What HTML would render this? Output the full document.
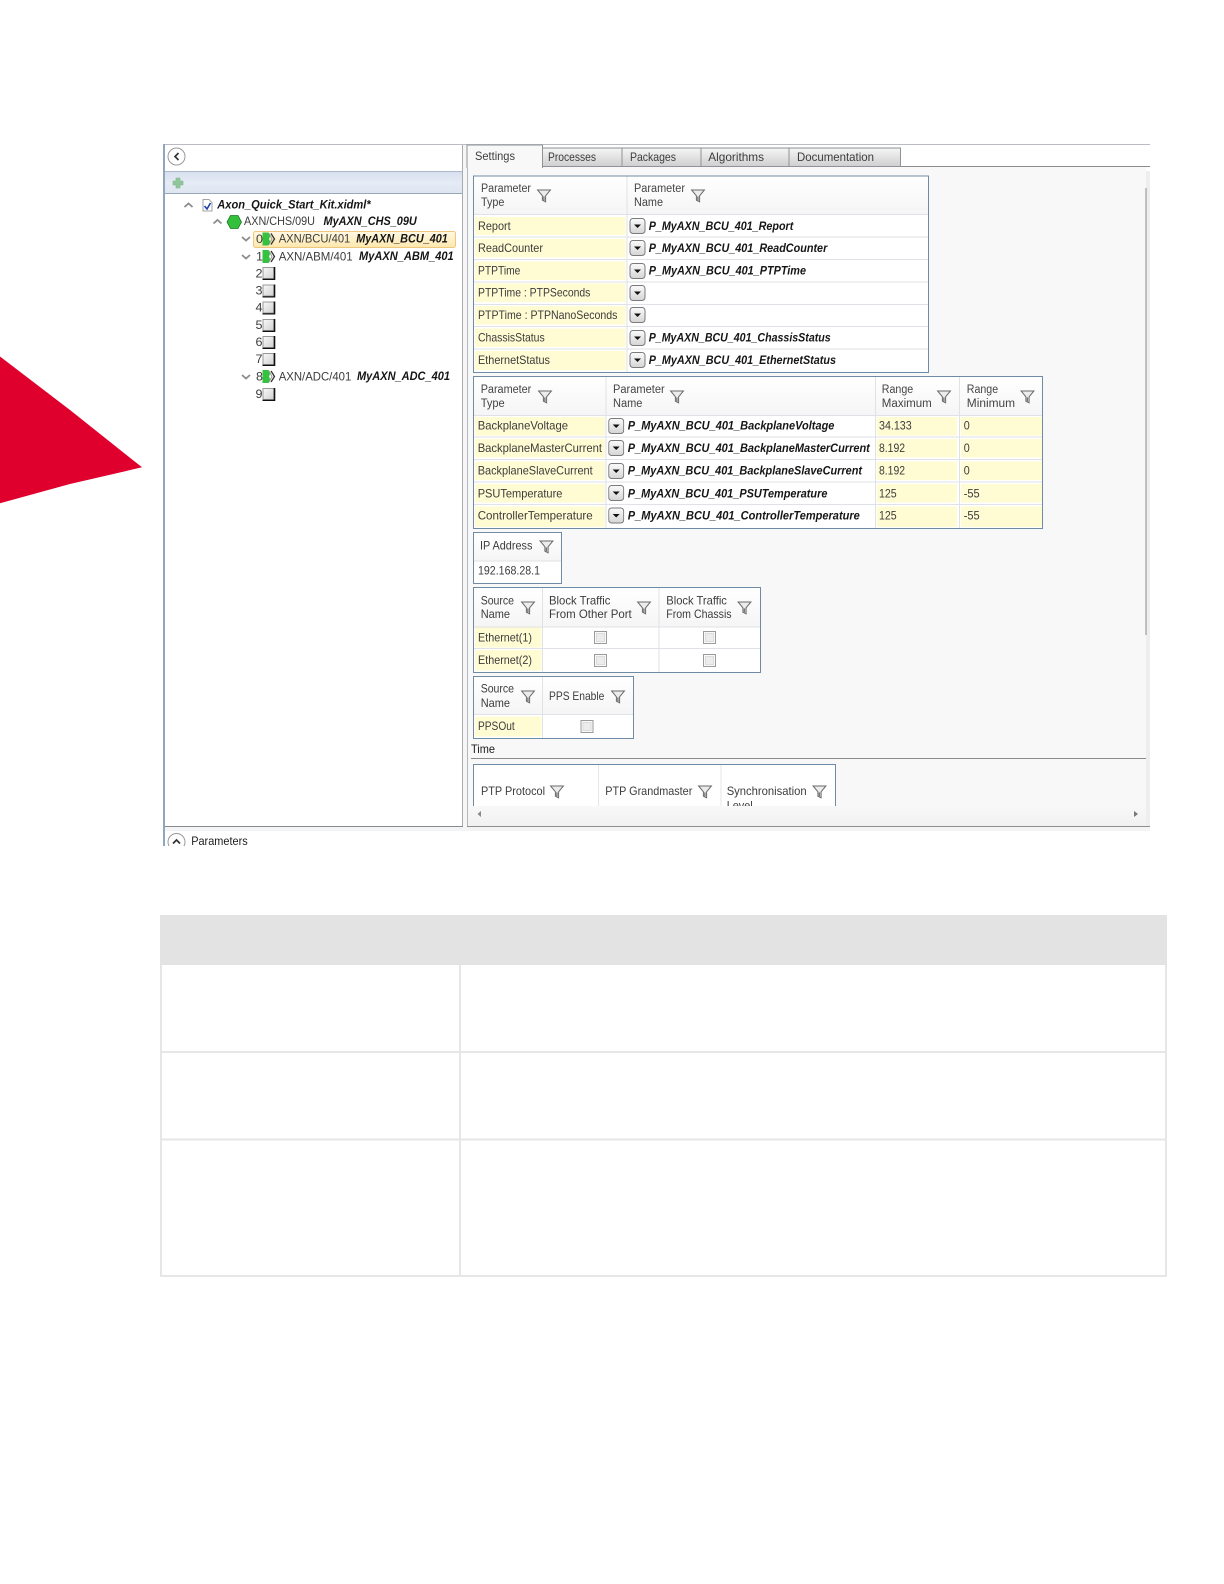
<!DOCTYPE html>
<html><head><meta charset="utf-8"><title>Axon Quick Start Kit</title>
<style>
html,body{margin:0;padding:0;background:#fff}
svg{display:block;filter:blur(.3px)}
text{font-family:"Liberation Sans",sans-serif;font-size:12px;fill:#3c3c3c}
.b{font-weight:bold;font-style:italic;fill:#151515}
.h{font-size:11.5px;fill:#444}
.k{fill:#1c1c1c}
</style></head><body>
<svg width="1224" height="1584" viewBox="0 0 1224 1584" xmlns="http://www.w3.org/2000/svg">
<defs>
<linearGradient id="hd" x1="0" y1="0" x2="0" y2="1"><stop offset="0" stop-color="#fff"/><stop offset="1" stop-color="#f5f5f5"/></linearGradient>
<linearGradient id="tab" x1="0" y1="0" x2="0" y2="1"><stop offset="0" stop-color="#f5f5f5"/><stop offset="1" stop-color="#cfcfcf"/></linearGradient>
<linearGradient id="strip" x1="0" y1="0" x2="0" y2="1"><stop offset="0" stop-color="#d6dfee"/><stop offset=".5" stop-color="#e6ebf5"/><stop offset="1" stop-color="#dde5f1"/></linearGradient>
<linearGradient id="sel" x1="0" y1="0" x2="0" y2="1"><stop offset="0" stop-color="#fff8e2"/><stop offset="1" stop-color="#fde7ad"/></linearGradient>
<linearGradient id="btn" x1="0" y1="0" x2="0" y2="1"><stop offset="0" stop-color="#fbfbfb"/><stop offset="1" stop-color="#d5d5d5"/></linearGradient>
<linearGradient id="bx" x1="0" y1="0" x2="1" y2="1"><stop offset="0" stop-color="#fafafa"/><stop offset="1" stop-color="#cfcfcf"/></linearGradient>
<linearGradient id="hs" x1="0" y1="0" x2="0" y2="1"><stop offset="0" stop-color="#f8f8f8"/><stop offset="1" stop-color="#f1f1f1"/></linearGradient>
<symbol id="f" width="14" height="14" viewBox="0 0 14 14" overflow="visible"><path d="M.6 1H13.4L8.6 6.8V12.8L5.4 11.2V6.8Z" fill="#ececec" stroke="#6a6a6a" stroke-width="1"/><path d="M6.9 7.4V11.4" stroke="#777" stroke-width="1.4"/></symbol>
<symbol id="d" width="16" height="16" viewBox="0 0 16 16"><rect x=".5" y=".5" width="15" height="15" rx="3" fill="url(#btn)" stroke="#7a7a7a"/><path d="M4.5 6.5H11.5L8 10Z" fill="#111"/></symbol>
<symbol id="c" width="13" height="13" viewBox="0 0 13 13"><rect x=".5" y=".5" width="12" height="12" fill="#f9f9f9" stroke="#9a9b9b"/><rect x="2.5" y="2.5" width="8" height="8" fill="#ececec" stroke="#dcdcdc"/></symbol>
<symbol id="x" width="13" height="13" viewBox="0 0 13 13"><rect x=".5" y=".5" width="11" height="11" fill="url(#bx)" stroke="#999"/><path d="M12 0V12.5H0" fill="none" stroke="#111" stroke-width="1.6"/></symbol>
<symbol id="m" width="13" height="13" viewBox="0 0 13 13"><path d="M0 0H6L8 3L6.5 6.5L8 10L6 13H0Z" fill="#35c23f"/><path d="M8.5 1L12 6.5L8.5 12" fill="none" stroke="#333" stroke-width="1.3"/><path d="M6.5 1L9.5 6.5L6.5 12" fill="none" stroke="#9a9a9a" stroke-width="1"/></symbol>
<symbol id="up" width="10" height="6" viewBox="0 0 10 6"><path d="M1 5L5 1.5L9 5" fill="none" stroke="#8c8c8c" stroke-width="1.8"/></symbol>
<symbol id="dn" width="10" height="6" viewBox="0 0 10 6"><path d="M1 1L5 4.5L9 1" fill="none" stroke="#8c8c8c" stroke-width="1.8"/></symbol>
<clipPath id="cp1"><rect x="160" y="827" width="200" height="19"/></clipPath>
<clipPath id="cp2"><rect x="468" y="760" width="676" height="46"/></clipPath>
</defs>

<!-- red triangle -->
<path d="M0 356.5L70 410L142 467.3L70 484L0 503.3Z" fill="#e0002d"/>

<!-- main window -->
<rect x="164" y="144" width="986" height="702" fill="#fff"/>
<rect x="463" y="144" width="4" height="683" fill="#f6f6f6"/>
<rect x="164" y="827" width="986" height="4" fill="#f4f4f4"/>
<rect x="164" y="144" width="986" height="1" fill="#b9bcc4"/>
<rect x="163" y="144" width="2" height="702" fill="#8fa6bd"/>

<!-- left panel -->
<rect x="165" y="171" width="298" height="23" fill="url(#strip)"/>
<rect x="165" y="171" width="298" height="1" fill="#aeb9c9"/>
<rect x="165" y="193" width="298" height="1" fill="#99a7ba"/>
<rect x="462" y="145" width="1" height="682" fill="#a8acb2"/>
<rect x="165" y="826" width="298" height="1" fill="#858b8e"/>
<circle cx="176.5" cy="156.5" r="8.5" fill="#fff" stroke="#9a9a9a"/>
<path d="M178.5 153L175 156.5L178.5 160" fill="none" stroke="#333" stroke-width="1.7"/>
<path d="M176 178H180V181H183V185H180V188H176V185H173V181H176Z" fill="#8fc79a" stroke="#7fb58b" stroke-width=".6"/>

<g clip-path="url(#cp1)">
<circle cx="176.5" cy="842" r="8.5" fill="#fff" stroke="#9a9a9a"/>
<path d="M173 843.5L176.5 840L180 843.5" fill="none" stroke="#333" stroke-width="1.7"/>
<text x="191.2" y="845" textLength="56.5" lengthAdjust="spacingAndGlyphs" class="k">Parameters</text>
</g>

<!-- tree -->
<use href="#up" x="183.5" y="202"/>
<path d="M203 199.5H209L212 202.5V211H203Z" fill="#fff" stroke="#888" stroke-width=".8"/>
<path d="M204.5 206L207 209L210.5 203" fill="none" stroke="#1c3fae" stroke-width="1.6"/>
<text x="217.3" y="208.3" textLength="153.4" lengthAdjust="spacingAndGlyphs" class="b">Axon_Quick_Start_Kit.xidml*</text>
<use href="#up" x="212.5" y="218.5"/>
<path d="M230.5 215.5H238L241.5 222L238 228.5H230.5L227 222Z" fill="#34c03c" stroke="#1d7a24" stroke-width=".8"/>
<text x="244" y="225" textLength="71" lengthAdjust="spacingAndGlyphs">AXN/CHS/09U</text>
<text x="323.5" y="225" textLength="93.3" lengthAdjust="spacingAndGlyphs" class="b">MyAXN_CHS_09U</text>

<rect x="253.5" y="231.5" width="202" height="16" rx="2" fill="url(#sel)" stroke="#eec77c"/>
<use href="#dn" x="241" y="236"/>
<text x="256" y="243" textLength="7" lengthAdjust="spacingAndGlyphs">0</text>
<use href="#m" x="262.5" y="232.5"/>
<text x="278.7" y="242.7" textLength="71.6" lengthAdjust="spacingAndGlyphs">AXN/BCU/401</text>
<text x="356.2" y="242.7" textLength="91.6" lengthAdjust="spacingAndGlyphs" class="b">MyAXN_BCU_401</text>

<use href="#dn" x="241" y="254"/>
<text x="256" y="260.5" textLength="7" lengthAdjust="spacingAndGlyphs">1</text>
<use href="#m" x="262.5" y="250"/>
<text x="278.7" y="260.5" textLength="74" lengthAdjust="spacingAndGlyphs">AXN/ABM/401</text>
<text x="359" y="260" textLength="94.7" lengthAdjust="spacingAndGlyphs" class="b">MyAXN_ABM_401</text>

<text x="255.5" y="277.5" textLength="7" lengthAdjust="spacingAndGlyphs">2</text><use href="#x" x="262.5" y="267"/>
<text x="255.5" y="294.5" textLength="7" lengthAdjust="spacingAndGlyphs">3</text><use href="#x" x="262.5" y="284.5"/>
<text x="255.5" y="311.5" textLength="7" lengthAdjust="spacingAndGlyphs">4</text><use href="#x" x="262.5" y="301.5"/>
<text x="255.5" y="329" textLength="7" lengthAdjust="spacingAndGlyphs">5</text><use href="#x" x="262.5" y="319"/>
<text x="255.5" y="346" textLength="7" lengthAdjust="spacingAndGlyphs">6</text><use href="#x" x="262.5" y="336"/>
<text x="255.5" y="363" textLength="7" lengthAdjust="spacingAndGlyphs">7</text><use href="#x" x="262.5" y="353"/>
<use href="#dn" x="241" y="374"/>
<text x="256" y="380.5" textLength="7" lengthAdjust="spacingAndGlyphs">8</text>
<use href="#m" x="262.5" y="370"/>
<text x="278.7" y="380.3" textLength="72.6" lengthAdjust="spacingAndGlyphs">AXN/ADC/401</text>
<text x="357" y="380" textLength="93" lengthAdjust="spacingAndGlyphs" class="b">MyAXN_ADC_401</text>
<text x="255.5" y="398" textLength="7" lengthAdjust="spacingAndGlyphs">9</text><use href="#x" x="262.5" y="388"/>

<!-- right panel -->
<rect x="467" y="167" width="679" height="659" fill="#f8f8f8"/>
<rect x="467" y="167" width="1" height="660" fill="#b4b7bb"/>
<rect x="467" y="826" width="683" height="1" fill="#8b8f92"/>
<rect x="467" y="166" width="683" height="1" fill="#8a8d90"/>
<rect x="1146" y="171" width="4" height="655" fill="#eeeeee"/>
<rect x="1145.5" y="188" width="1" height="447" fill="#8c8c8c"/>

<!-- tabs -->
<path d="M542 166.5V148H622V166.5Z" fill="url(#tab)" stroke="#8f9296"/>
<path d="M622 166.5V148H701V166.5Z" fill="url(#tab)" stroke="#8f9296"/>
<path d="M701 166.5V148H789V166.5Z" fill="url(#tab)" stroke="#8f9296"/>
<path d="M789 166.5V148H900.5V166.5Z" fill="url(#tab)" stroke="#8f9296"/>
<path d="M467 168V145H542.5V168" fill="#f8f8f8" stroke="#8f9296"/>
<rect x="468" y="165" width="74" height="4" fill="#f8f8f8"/>
<text x="475" y="160" textLength="40" lengthAdjust="spacingAndGlyphs">Settings</text>
<text x="548" y="161" textLength="48" lengthAdjust="spacingAndGlyphs">Processes</text>
<text x="630" y="161" textLength="46" lengthAdjust="spacingAndGlyphs">Packages</text>
<text x="708.3" y="161" textLength="55.7" lengthAdjust="spacingAndGlyphs">Algorithms</text>
<text x="797" y="161" textLength="77" lengthAdjust="spacingAndGlyphs">Documentation</text>

<!-- table 1 -->
<rect x="473.5" y="176" width="455" height="196.5" fill="#fff"/>
<rect x="474" y="176" width="454" height="38" fill="url(#hd)"/>
<g fill="#fffbd2">
<rect x="475" y="217" width="150.5" height="18"/><rect x="475" y="239" width="150.5" height="18.5"/><rect x="475" y="261.5" width="150.5" height="18.5"/><rect x="475" y="283.5" width="150.5" height="18.5"/><rect x="475" y="306" width="150.5" height="18.5"/><rect x="475" y="328.5" width="150.5" height="18.5"/><rect x="475" y="351" width="150.5" height="19"/>
</g>
<g fill="#dfe2e6">
<rect x="474" y="214" width="454" height="1"/><rect x="474" y="236.5" width="454" height="1"/><rect x="474" y="259" width="454" height="1"/><rect x="474" y="281.5" width="454" height="1"/><rect x="474" y="304" width="454" height="1"/><rect x="474" y="326" width="454" height="1"/><rect x="474" y="348.5" width="454" height="1"/><rect x="626.5" y="176" width="1" height="196"/>
</g>
<rect x="473.5" y="176" width="455" height="196.5" fill="none" stroke="#6f8ba6"/>
<text x="481" y="192" textLength="50" lengthAdjust="spacingAndGlyphs" class="h">Parameter</text>
<text x="481" y="206" textLength="23.4" lengthAdjust="spacingAndGlyphs" class="h">Type</text>
<use href="#f" x="537" y="189"/>
<text x="634" y="192" textLength="51" lengthAdjust="spacingAndGlyphs" class="h">Parameter</text>
<text x="634" y="206" textLength="29" lengthAdjust="spacingAndGlyphs" class="h">Name</text>
<use href="#f" x="691" y="189"/>
<text x="478" y="230" textLength="32.7" lengthAdjust="spacingAndGlyphs">Report</text>
<text x="478" y="251.8" textLength="65" lengthAdjust="spacingAndGlyphs">ReadCounter</text>
<text x="478" y="274.7" textLength="42.4" lengthAdjust="spacingAndGlyphs">PTPTime</text>
<text x="478" y="296.7" textLength="112.4" lengthAdjust="spacingAndGlyphs">PTPTime : PTPSeconds</text>
<text x="478" y="318.8" textLength="139.4" lengthAdjust="spacingAndGlyphs">PTPTime : PTPNanoSeconds</text>
<text x="478" y="341.7" textLength="66.7" lengthAdjust="spacingAndGlyphs">ChassisStatus</text>
<text x="478" y="364" textLength="72" lengthAdjust="spacingAndGlyphs">EthernetStatus</text>
<use href="#d" x="629.5" y="218"/><use href="#d" x="629.5" y="240"/><use href="#d" x="629.5" y="263"/><use href="#d" x="629.5" y="285"/><use href="#d" x="629.5" y="307"/><use href="#d" x="629.5" y="330"/><use href="#d" x="629.5" y="352"/>
<text x="648.7" y="230" textLength="144.6" lengthAdjust="spacingAndGlyphs" class="b">P_MyAXN_BCU_401_Report</text>
<text x="648.7" y="252" textLength="178.6" lengthAdjust="spacingAndGlyphs" class="b">P_MyAXN_BCU_401_ReadCounter</text>
<text x="648.7" y="274.7" textLength="157.3" lengthAdjust="spacingAndGlyphs" class="b">P_MyAXN_BCU_401_PTPTime</text>
<text x="648.7" y="341.7" textLength="182" lengthAdjust="spacingAndGlyphs" class="b">P_MyAXN_BCU_401_ChassisStatus</text>
<text x="648.7" y="364" textLength="187.3" lengthAdjust="spacingAndGlyphs" class="b">P_MyAXN_BCU_401_EthernetStatus</text>

<!-- table 2 -->
<rect x="473.5" y="376.5" width="569" height="152" fill="#fff"/>
<rect x="474" y="377" width="568" height="38" fill="url(#hd)"/>
<g fill="#fffbd2">
<rect x="475" y="417" width="130" height="18.5"/><rect x="475" y="439" width="130" height="18.5"/><rect x="475" y="461.5" width="130" height="18.5"/><rect x="475" y="484" width="130" height="18.5"/><rect x="475" y="506.5" width="130" height="20.5"/>
<rect x="877" y="417" width="80" height="18.5"/><rect x="877" y="439" width="80" height="18.5"/><rect x="877" y="461.5" width="80" height="18.5"/><rect x="877" y="484" width="80" height="18.5"/><rect x="877" y="506.5" width="80" height="20.5"/>
<rect x="961" y="417" width="81" height="18.5"/><rect x="961" y="439" width="81" height="18.5"/><rect x="961" y="461.5" width="81" height="18.5"/><rect x="961" y="484" width="81" height="18.5"/><rect x="961" y="506.5" width="81" height="20.5"/>
</g>
<g fill="#dfe2e6">
<rect x="474" y="415" width="568" height="1"/><rect x="474" y="436.5" width="568" height="1"/><rect x="474" y="459" width="568" height="1"/><rect x="474" y="481.5" width="568" height="1"/><rect x="474" y="504" width="568" height="1"/>
<rect x="605.5" y="377" width="1" height="151"/><rect x="875" y="377" width="1" height="151"/><rect x="959" y="377" width="1" height="151"/>
</g>
<rect x="473.5" y="376.5" width="569" height="152" fill="none" stroke="#6f8ba6"/>
<text x="480.7" y="393" textLength="50.6" lengthAdjust="spacingAndGlyphs" class="h">Parameter</text>
<text x="480.7" y="407" textLength="24" lengthAdjust="spacingAndGlyphs" class="h">Type</text>
<use href="#f" x="538" y="390"/>
<text x="613" y="393" textLength="51.7" lengthAdjust="spacingAndGlyphs" class="h">Parameter</text>
<text x="613" y="407" textLength="29.4" lengthAdjust="spacingAndGlyphs" class="h">Name</text>
<use href="#f" x="670" y="390"/>
<text x="881.8" y="393" textLength="31.4" lengthAdjust="spacingAndGlyphs" class="h">Range</text>
<text x="881.8" y="407" textLength="50" lengthAdjust="spacingAndGlyphs" class="h">Maximum</text>
<use href="#f" x="937" y="390"/>
<text x="966.8" y="393" textLength="31.3" lengthAdjust="spacingAndGlyphs" class="h">Range</text>
<text x="966.8" y="407" textLength="48.3" lengthAdjust="spacingAndGlyphs" class="h">Minimum</text>
<use href="#f" x="1020.5" y="390"/>
<text x="477.7" y="429.7" textLength="90.3" lengthAdjust="spacingAndGlyphs">BackplaneVoltage</text>
<text x="477.7" y="452" textLength="124.3" lengthAdjust="spacingAndGlyphs">BackplaneMasterCurrent</text>
<text x="477.7" y="474.5" textLength="115" lengthAdjust="spacingAndGlyphs">BackplaneSlaveCurrent</text>
<text x="477.7" y="497.3" textLength="84.7" lengthAdjust="spacingAndGlyphs">PSUTemperature</text>
<text x="477.7" y="519.5" textLength="115" lengthAdjust="spacingAndGlyphs">ControllerTemperature</text>
<use href="#d" x="608.2" y="418"/><use href="#d" x="608.2" y="440"/><use href="#d" x="608.2" y="463"/><use href="#d" x="608.2" y="485"/><use href="#d" x="608.2" y="507.5"/>
<text x="627.8" y="429.7" textLength="206.6" lengthAdjust="spacingAndGlyphs" class="b">P_MyAXN_BCU_401_BackplaneVoltage</text>
<text x="627.8" y="452" textLength="242" lengthAdjust="spacingAndGlyphs" class="b">P_MyAXN_BCU_401_BackplaneMasterCurrent</text>
<text x="627.8" y="474.5" textLength="234.2" lengthAdjust="spacingAndGlyphs" class="b">P_MyAXN_BCU_401_BackplaneSlaveCurrent</text>
<text x="627.8" y="497.3" textLength="199.6" lengthAdjust="spacingAndGlyphs" class="b">P_MyAXN_BCU_401_PSUTemperature</text>
<text x="627.8" y="519.5" textLength="232" lengthAdjust="spacingAndGlyphs" class="b">P_MyAXN_BCU_401_ControllerTemperature</text>
<text x="879" y="429.7" textLength="32.7" lengthAdjust="spacingAndGlyphs">34.133</text>
<text x="879" y="452" textLength="26" lengthAdjust="spacingAndGlyphs">8.192</text>
<text x="879" y="474.5" textLength="26" lengthAdjust="spacingAndGlyphs">8.192</text>
<text x="879" y="497.3" textLength="17.7" lengthAdjust="spacingAndGlyphs">125</text>
<text x="879" y="519.5" textLength="17.7" lengthAdjust="spacingAndGlyphs">125</text>
<text x="963.7" y="429.7" textLength="6" lengthAdjust="spacingAndGlyphs">0</text>
<text x="963.7" y="452" textLength="6" lengthAdjust="spacingAndGlyphs">0</text>
<text x="963.7" y="474.5" textLength="6" lengthAdjust="spacingAndGlyphs">0</text>
<text x="963.7" y="497.3" textLength="16" lengthAdjust="spacingAndGlyphs">-55</text>
<text x="963.7" y="519.5" textLength="16" lengthAdjust="spacingAndGlyphs">-55</text>

<!-- IP table -->
<rect x="473.5" y="532.5" width="88" height="51" fill="#fff"/>
<rect x="474" y="533" width="87" height="28" fill="url(#hd)"/>
<rect x="474" y="560.5" width="87" height="1" fill="#dfe2e6"/>
<rect x="473.5" y="532.5" width="88" height="51" fill="none" stroke="#6f8ba6"/>
<text x="480" y="549.7" textLength="52.4" lengthAdjust="spacingAndGlyphs">IP Address</text>
<use href="#f" x="539.5" y="540"/>
<text x="478" y="574.7" textLength="62" lengthAdjust="spacingAndGlyphs">192.168.28.1</text>

<!-- table 3 -->
<rect x="473.5" y="587.5" width="287" height="85" fill="#fff"/>
<rect x="474" y="588" width="286" height="39" fill="url(#hd)"/>
<rect x="475" y="627.5" width="66.5" height="20" fill="#fffbd2"/>
<rect x="475" y="650" width="66.5" height="20.5" fill="#fffbd2"/>
<g fill="#dfe2e6"><rect x="474" y="626.5" width="286" height="1"/><rect x="474" y="648" width="286" height="1"/><rect x="542" y="588" width="1" height="84"/><rect x="658.5" y="588" width="1" height="84"/></g>
<rect x="473.5" y="587.5" width="287" height="85" fill="none" stroke="#6f8ba6"/>
<text x="480.7" y="604.5" textLength="33.3" lengthAdjust="spacingAndGlyphs">Source</text>
<text x="480.7" y="618" textLength="29.3" lengthAdjust="spacingAndGlyphs">Name</text>
<use href="#f" x="521" y="601"/>
<text x="549" y="604.5" textLength="61.4" lengthAdjust="spacingAndGlyphs">Block Traffic</text>
<text x="549" y="618" textLength="82.7" lengthAdjust="spacingAndGlyphs">From Other Port</text>
<use href="#f" x="637" y="601"/>
<text x="666.3" y="604.5" textLength="60.6" lengthAdjust="spacingAndGlyphs">Block Traffic</text>
<text x="666.3" y="618" textLength="65.3" lengthAdjust="spacingAndGlyphs">From Chassis</text>
<use href="#f" x="737.5" y="601"/>
<text x="478" y="641.7" textLength="54" lengthAdjust="spacingAndGlyphs">Ethernet(1)</text>
<text x="478" y="664" textLength="54" lengthAdjust="spacingAndGlyphs">Ethernet(2)</text>
<use href="#c" x="594" y="631"/><use href="#c" x="703" y="631"/><use href="#c" x="594" y="654"/><use href="#c" x="703" y="654"/>

<!-- table 4 -->
<rect x="473.5" y="676.5" width="160" height="62" fill="#fff"/>
<rect x="474" y="677" width="159" height="37.5" fill="url(#hd)"/>
<rect x="475" y="716.5" width="66.5" height="20" fill="#fffbd2"/>
<g fill="#dfe2e6"><rect x="474" y="714" width="159" height="1"/><rect x="542" y="677" width="1" height="61"/></g>
<rect x="473.5" y="676.5" width="160" height="62" fill="none" stroke="#6f8ba6"/>
<text x="480.7" y="692.5" textLength="33.3" lengthAdjust="spacingAndGlyphs">Source</text>
<text x="480.7" y="707" textLength="29.3" lengthAdjust="spacingAndGlyphs">Name</text>
<use href="#f" x="521" y="690"/>
<text x="549" y="700" textLength="55.4" lengthAdjust="spacingAndGlyphs">PPS Enable</text>
<use href="#f" x="611" y="690"/>
<text x="478" y="730" textLength="36.7" lengthAdjust="spacingAndGlyphs">PPSOut</text>
<use href="#c" x="580.5" y="720"/>

<!-- time -->
<text x="471" y="753" textLength="24" lengthAdjust="spacingAndGlyphs" class="k">Time</text>
<rect x="471" y="758" width="675" height="1" fill="#8c8c8c"/>

<!-- table 5 -->
<g clip-path="url(#cp2)">
<rect x="473.5" y="764.5" width="362" height="60" fill="#fff" stroke="#6f8ba6"/>
<rect x="598" y="765" width="1" height="50" fill="#e4e6e8"/><rect x="720.5" y="765" width="1" height="50" fill="#e4e6e8"/>
<text x="481" y="795" textLength="64" lengthAdjust="spacingAndGlyphs">PTP Protocol</text>
<use href="#f" x="550" y="785"/>
<text x="605.3" y="795" textLength="87" lengthAdjust="spacingAndGlyphs">PTP Grandmaster</text>
<use href="#f" x="698" y="785"/>
<text x="726.7" y="795" textLength="80" lengthAdjust="spacingAndGlyphs">Synchronisation</text>
<use href="#f" x="812.5" y="785"/>
<text x="726.7" y="809.5" textLength="26" lengthAdjust="spacingAndGlyphs">Level</text>
</g>
<rect x="468" y="806" width="678" height="20" fill="url(#hs)"/>
<path d="M481 811L477.5 814L481 817Z" fill="#888"/>
<path d="M1134 811L1138 814L1134 817Z" fill="#777"/>

<!-- lower table -->
<rect x="160" y="915" width="1007" height="50" fill="#e3e3e3"/>
<g fill="none" stroke="#e6e6e6" stroke-width="2">
<path d="M161 965V1276H1166V965"/>
<path d="M460 965V1276"/>
<path d="M161 1052H1166"/>
<path d="M161 1139.5H1166"/>
</g>
</svg>
</body></html>
